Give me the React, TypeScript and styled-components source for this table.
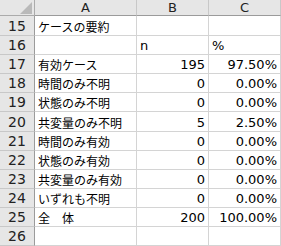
import { Fragment } from "react";
import styled, { createGlobalStyle } from "styled-components";

const GlobalStyle = createGlobalStyle`
  body {
    margin: 0;
    background: #ffffff;
  }
`;

interface Row {
  num: number;
  label: string;
  n: string;
  pct: string;
  tall?: boolean;
  headerRow?: boolean;
}

const rows: Row[] = [
  { num: 15, label: "ケースの要約", n: "", pct: "", tall: true },
  { num: 16, label: "", n: "n", pct: "%", headerRow: true },
  { num: 17, label: "有効ケース", n: "195", pct: "97.50%" },
  { num: 18, label: "時間のみ不明", n: "0", pct: "0.00%" },
  { num: 19, label: "状態のみ不明", n: "0", pct: "0.00%" },
  { num: 20, label: "共変量のみ不明", n: "5", pct: "2.50%", tall: true },
  { num: 21, label: "時間のみ有効", n: "0", pct: "0.00%" },
  { num: 22, label: "状態のみ有効", n: "0", pct: "0.00%" },
  { num: 23, label: "共変量のみ有効", n: "0", pct: "0.00%" },
  { num: 24, label: "いずれも不明", n: "0", pct: "0.00%" },
  { num: 25, label: "全\u3000体", n: "200", pct: "100.00%" },
  { num: 26, label: "", n: "", pct: "" },
];

const Sheet = styled.div`
  display: grid;
  grid-template-columns: 35px 102px 72px 72px;
  width: 281px;
  font-family: "DejaVu Sans", "Noto Sans CJK JP", sans-serif;
  color: #000;
`;

const Corner = styled.div`
  position: relative;
  height: 15px;
  background: #e6e6e6;
  border-right: 1px solid #ababab;
  border-bottom: 1px solid #ababab;
`;

const CornerMark = styled.div`
  position: absolute;
  right: 2px;
  bottom: 1px;
  width: 12px;
  height: 12px;
  background: #b9b9b9;
  clip-path: polygon(100% 0, 100% 100%, 0 100%);
`;

const ColHead = styled.div`
  height: 15px;
  background: #e6e6e6;
  border-right: 1px solid #c8c8c8;
  border-bottom: 1px solid #9b9b9b;
  font-size: 13px;
  line-height: 15px;
  text-align: center;
  color: #222;
`;

const RowHead = styled.div<{ $tall?: boolean }>`
  height: ${(p) => (p.$tall ? 19 : 18)}px;
  background: #e6e6e6;
  border-right: 1px solid #9b9b9b;
  border-bottom: 1px solid #c8c8c8;
  font-size: 14px;
  display: flex;
  align-items: flex-end;
  justify-content: center;
  line-height: 18px;
  color: #222;
`;

const Cell = styled.div<{ $tall?: boolean; $align?: "left" | "right"; $jp?: boolean }>`
  height: ${(p) => (p.$tall ? 19 : 18)}px;
  border-right: 1px solid #d4d4d4;
  border-bottom: 1px solid #d4d4d4;
  display: flex;
  align-items: flex-end;
  justify-content: ${(p) => (p.$align === "right" ? "flex-end" : "flex-start")};
  padding: 0 3px;
  font-family: ${(p) =>
    p.$jp ? '"Noto Sans CJK JP", sans-serif' : '"DejaVu Sans", sans-serif'};
  font-size: ${(p) => (p.$jp ? 12 : 13)}px;
  line-height: 17px;
  white-space: nowrap;
`;

export default function App() {
  return (
    <>
      <GlobalStyle />
      <Sheet>
        <Corner>
          <CornerMark />
        </Corner>
        <ColHead>A</ColHead>
        <ColHead>B</ColHead>
        <ColHead>C</ColHead>
        {rows.map((r) => (
          <Fragment key={r.num}>
            <RowHead $tall={r.tall}>{r.num}</RowHead>
            <Cell $tall={r.tall} $jp>
              {r.label}
            </Cell>
            <Cell $tall={r.tall} $align={r.headerRow ? "left" : "right"}>
              {r.n}
            </Cell>
            <Cell $tall={r.tall} $align={r.headerRow ? "left" : "right"}>
              {r.pct}
            </Cell>
          </Fragment>
        ))}
      </Sheet>
    </>
  );
}
